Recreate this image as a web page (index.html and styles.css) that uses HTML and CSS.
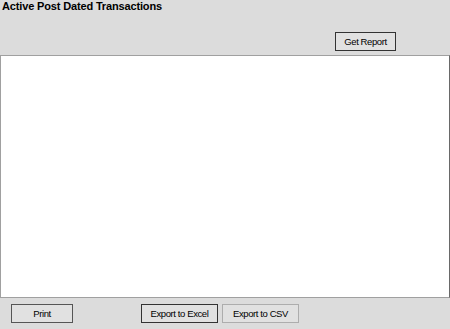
FILE: index.html
```html
<!DOCTYPE html>
<html>
<head>
<meta charset="utf-8">
<link rel="stylesheet" href="styles.css">
</head>
<body>
<div class="page">
  <div class="title">Active Post Dated Transactions</div>
  <div class="toolbar">
    <button class="btn btn-dark btn-report">Get Report</button>
  </div>
  <div class="grid"></div>
  <div class="footer">
    <button class="btn btn-mid btn-print">Print</button>
    <button class="btn btn-dark btn-excel">Export to Excel</button>
    <button class="btn btn-light btn-csv">Export to CSV</button>
  </div>
</div>
</body>
</html>
```

FILE: styles.css
```css
html, body {
  margin: 0;
  padding: 0;
  background: #dcdcdc;
}
.page {
  width: 450px;
  height: 329px;
  display: flex;
  flex-direction: column;
  font-family: "Liberation Sans", Arial, sans-serif;
  font-size: 11px;
  color: #000;
}
.title {
  font-weight: bold;
  line-height: 13px;
  padding-left: 2px;
  letter-spacing: -0.15px;
}
.toolbar {
  display: flex;
  justify-content: flex-end;
  padding-right: 54px;
  margin-top: 19px;
}
.btn {
  box-sizing: border-box;
  height: 19px;
  margin: 0;
  padding: 1px 0 0 0;
  background: #e1e1e1;
  font-family: "Liberation Sans", Arial, sans-serif;
  font-size: 9.5px;
  letter-spacing: -0.4px;
  color: #000;
  line-height: 16px;
  text-align: center;
  border: 1px solid #adadad;
  border-radius: 0;
}
.btn-dark { border-color: #333333; }
.btn-mid { border-color: #555555; }
.btn-light { border-color: #adadad; }
.btn-report { width: 61px; }
.grid {
  box-sizing: border-box;
  margin-top: 4px;
  height: 243px;
  background: #ffffff;
  border-top: 1px solid #a0a0a0;
  border-left: 1px solid #a0a0a0;
  border-right: 1px solid #696969;
  border-bottom: 1px solid #a0a0a0;
}
.footer {
  display: flex;
  margin-top: 6px;
  padding-left: 11px;
}
.btn-print { width: 62px; }
.btn-excel { width: 77px; margin-left: 68px; }
.btn-csv { width: 77px; margin-left: 4px; }
```
